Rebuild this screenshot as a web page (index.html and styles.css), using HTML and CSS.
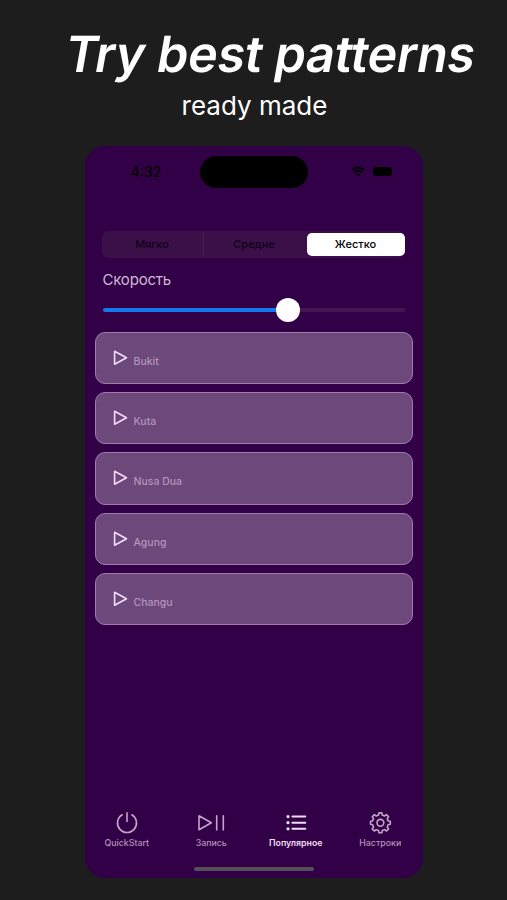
FILE: index.html
```html
<!DOCTYPE html>
<html lang="ru">
<head>
  <meta charset="UTF-8" />
  <meta name="viewport" content="width=device-width, initial-scale=1.0" />
  <title>Try best patterns</title>
  <link rel="stylesheet" href="styles.css">
</head>
<body>
  <h1>Try best patterns</h1>
  <p class="subtitle">ready made</p>

  <div class="phone">
    <div class="status">
      <div class="clock">4:32</div>
      <div class="island"></div>
      <div class="signals">
        <svg class="wifi" width="14" height="11" viewBox="0 0 14 11">
          <path d="M1 4 Q7 -1 13 4 M3 6.3 Q7 3 11 6.3" />
          <path class="dot" d="M4.8 8 Q7 6.4 9.2 8 L7 10.5 Z" />
        </svg>
        <div class="battery"></div>
      </div>
    </div>

    <div class="segments">
      <div class="segment">Мягко</div>
      <div class="segment">Средне</div>
      <div class="segment active">Жестко</div>
    </div>

    <div class="speed">Скорость</div>
    <div class="slider">
      <div class="fill"></div>
      <div class="knob"></div>
      <div class="rest"></div>
    </div>

    <div class="list">
      <div class="card">
        <svg class="play" width="16" height="18" viewBox="0 0 16 18"><path d="M2.6 2.3 V15.3 L14.5 8.8 Z" /></svg>
        <span>Bukit</span>
      </div>
      <div class="card">
        <svg class="play" width="16" height="18" viewBox="0 0 16 18"><path d="M2.6 2.3 V15.3 L14.5 8.8 Z" /></svg>
        <span>Kuta</span>
      </div>
      <div class="card">
        <svg class="play" width="16" height="18" viewBox="0 0 16 18"><path d="M2.6 2.3 V15.3 L14.5 8.8 Z" /></svg>
        <span>Nusa Dua</span>
      </div>
      <div class="card">
        <svg class="play" width="16" height="18" viewBox="0 0 16 18"><path d="M2.6 2.3 V15.3 L14.5 8.8 Z" /></svg>
        <span>Agung</span>
      </div>
      <div class="card">
        <svg class="play" width="16" height="18" viewBox="0 0 16 18"><path d="M2.6 2.3 V15.3 L14.5 8.8 Z" /></svg>
        <span>Changu</span>
      </div>
    </div>

    <div class="tabs">
      <div class="tab">
        <svg width="30" height="24" viewBox="-15 -12 30 24"><path d="M0 -10.3 V-1.6 M-4.8 -8.2 A9.5 9.5 0 1 0 4.8 -8.2" /></svg>
        <span>QuickStart</span>
      </div>
      <div class="tab">
        <svg width="30" height="24" viewBox="-15 -12 30 24"><path d="M-12 -7.2 V6.8 L0.3 -0.2 Z M5.7 -7.3 V6.9 M12.3 -7.3 V6.9" /></svg>
        <span>Запись</span>
      </div>
      <div class="tab active">
        <svg width="30" height="24" viewBox="-15 -12 30 24">
          <path d="M-3.6 -6.4 H9.3 M-3.6 -0.3 H9.3 M-3.6 5.8 H9.3" />
          <path class="dots" d="M-8 -6.4 h0 M-8 -0.3 h0 M-8 5.8 h0" />
        </svg>
        <span>Популярное</span>
      </div>
      <div class="tab">
        <svg width="30" height="24" viewBox="-15.4 -11.8 30 24">
          <path d="M-1.87 -7.78 L-1.5 -9.9 H1.5 L1.87 -7.78 L4.18 -6.82 L6.08 -8.2 L8.2 -6.08 L6.82 -4.18 L7.78 -1.87 L9.9 -1.5 V1.5 L7.78 1.87 L6.82 4.18 L8.2 6.08 L6.08 8.2 L4.18 6.82 L1.87 7.78 L1.5 9.9 H-1.5 L-1.87 7.78 L-4.18 6.82 L-6.08 8.2 L-8.2 6.08 L-6.82 4.18 L-7.78 1.87 L-9.9 1.5 V-1.5 L-7.78 -1.87 L-6.82 -4.18 L-8.2 -6.08 L-6.08 -8.2 L-4.18 -6.82 Z" />
          <circle r="3.4" />
        </svg>
        <span>Настроки</span>
      </div>
    </div>
    <div class="home"></div>
  </div>
</body>
</html>
```
FILE: styles.css
```css
:root {
  --bg: #1d1d1d;
  --screen: #320046;
  --card: #6d487a;
  --muted: #b493bd;
  --blue: #1478f0;
}
* { box-sizing: border-box; }
body {
  font-family: Inter, "Liberation Sans", sans-serif;
  display: flex;
  flex-direction: column;
  align-items: center;
  height: 900px;
  margin: 0;
  background-color: var(--bg);
  color: #fff;
  overflow: hidden;
}
h1 {
  font-size: 50px;
  font-weight: 600;
  line-height: 60px;
  letter-spacing: -0.2px;
  margin: 24px 0 0 35px;
  white-space: nowrap;
  transform: skewX(-10deg);
}
.subtitle {
  font-size: 26px;
  font-weight: 400;
  line-height: 32px;
  margin: 6px 0 0 2px;
}
.phone {
  display: flex;
  flex-direction: column;
  width: 338px;
  height: 732px;
  margin-top: 24px;
  background: var(--screen);
  border-radius: 20px;
}
.status {
  display: grid;
  grid-template-columns: 115px 108px 115px;
  height: 32px;
  margin-top: 10px;
  align-items: center;
  color: #000;
}
.clock {
  font-size: 14px;
  font-weight: 500;
  padding: 0 0 2px 46px;
}
.island {
  height: 32px;
  border-radius: 16px;
  background: #000;
}
.signals {
  display: flex;
  align-items: center;
  gap: 8px;
  padding: 0 0 2px 43px;
}
.wifi { fill: none; stroke: #000; stroke-width: 1.7; }
.wifi .dot { fill: #000; stroke: none; }
.battery {
  width: 19px;
  height: 9px;
  border-radius: 3px;
  background: #000;
}
.segments {
  display: flex;
  height: 27px;
  margin: 43px 18px 0 17px;
  padding: 2px 0;
  border-radius: 7px;
  background: #3b1049;
  color: #10001a;
}
.segment {
  flex: 1;
  font-size: 11px;
  font-weight: 500;
  line-height: 23px;
  text-align: center;
}
.segment:first-child { border-right: 1px solid #46204f; }
.segment.active {
  flex: none;
  width: 98px;
  margin-left: 2px;
  background: #fff;
  color: #000;
  border-radius: 5px;
}
.speed {
  font-size: 15px;
  line-height: 20px;
  letter-spacing: -0.2px;
  margin: 12px 0 0 18px;
  color: #d0b8d8;
}
.slider {
  display: flex;
  align-items: center;
  height: 24px;
  margin: 8px 18px 0;
}
.fill {
  width: 173px;
  height: 4px;
  border-radius: 2px 0 0 2px;
  background: var(--blue);
}
.knob {
  width: 24px;
  height: 24px;
  border-radius: 50%;
  background: #fff;
}
.rest {
  flex: 1;
  height: 4px;
  border-radius: 0 2px 2px 0;
  background: #421650;
}
.list {
  display: flex;
  flex-direction: column;
  gap: 8px;
  margin: 10px 10px 0;
}
.card {
  display: flex;
  align-items: center;
  height: 52.2px;
  padding-left: 16px;
  border: 1px solid #a17bae;
  border-radius: 10px;
  background: var(--card);
  color: var(--muted);
  font-size: 10.5px;
  font-weight: 500;
}
.card span { padding: 7px 0 0 6px; }
.play {
  fill: none;
  stroke: #f5dcfa;
  stroke-width: 1.6;
  stroke-linejoin: round;
}
.tabs {
  display: flex;
  margin-top: auto;
  color: var(--muted);
}
.tab {
  flex: 1;
  display: flex;
  flex-direction: column;
  align-items: center;
  font-size: 8.8px;
  font-weight: 500;
  line-height: 12px;
  white-space: nowrap;
}
.tab span { margin-top: 2px; }
.tab svg {
  fill: none;
  stroke: #c4a4cc;
  stroke-width: 1.6;
  stroke-linecap: round;
  stroke-linejoin: round;
}
.tab.active { color: #f0dcf5; font-weight: 600; }
.tab.active svg { stroke: #f0dcf5; stroke-width: 2; }
.tab.active .dots { stroke-width: 3.2; }
.home {
  width: 120px;
  height: 4px;
  margin: 18px auto 7px;
  border-radius: 2px;
  background: #565058;
}
```
